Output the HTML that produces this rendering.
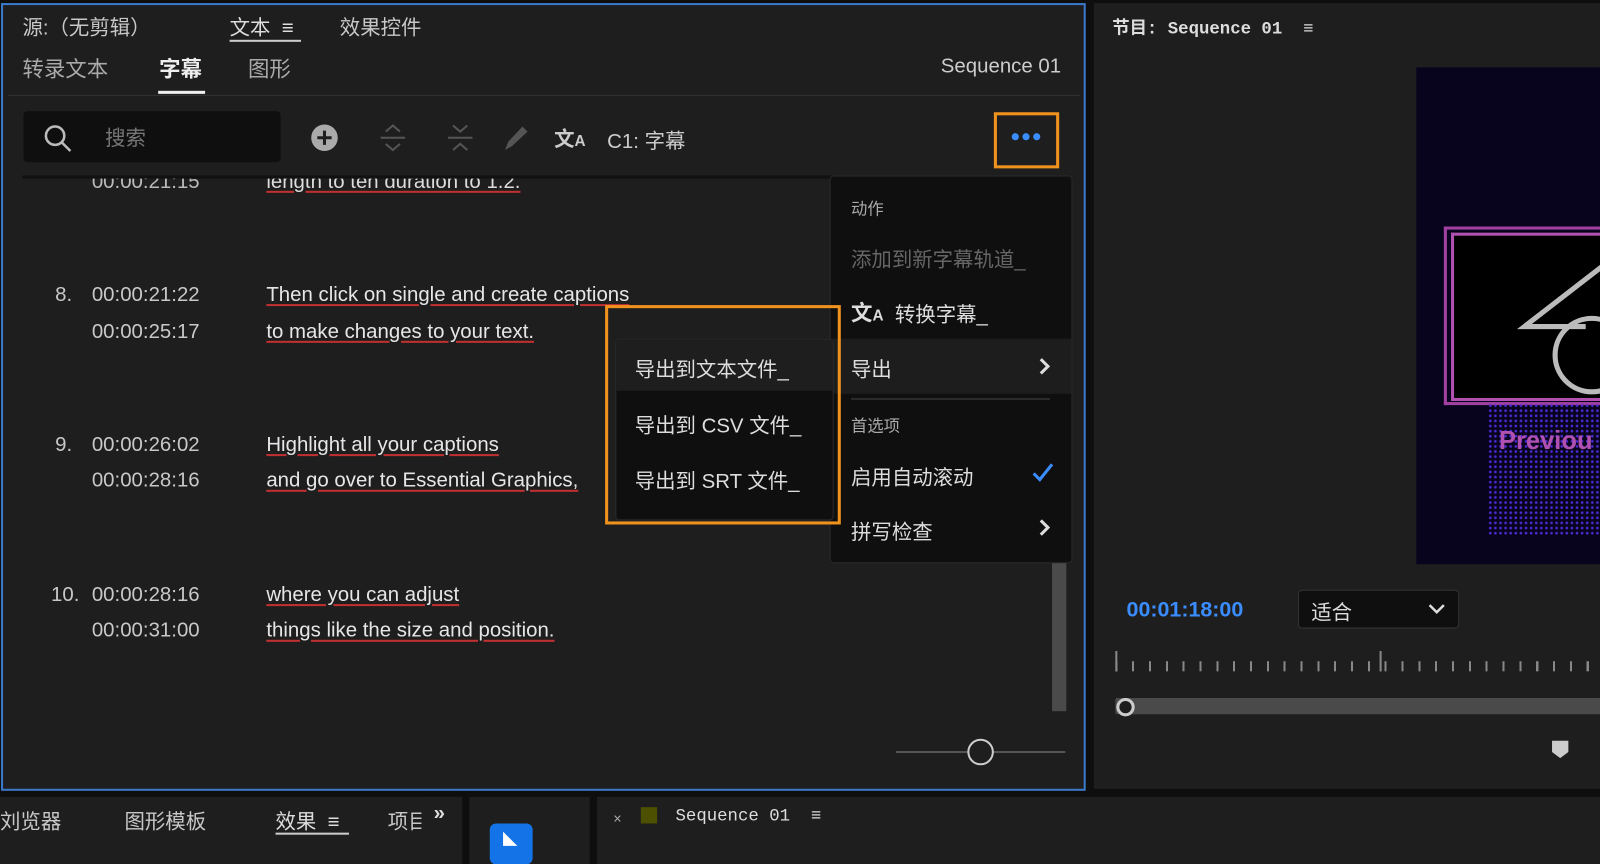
<!DOCTYPE html>
<html><head><meta charset="utf-8"><style>
*{margin:0;padding:0;box-sizing:border-box}
body{width:1600px;height:847px;background:#0e0e0e;overflow:hidden;position:relative;font-family:"Liberation Sans","Noto Sans CJK SC",sans-serif;color:#c8c8c8}
#w{position:absolute;left:0;top:0;width:1568px;height:830px;transform:scale(1.0204);transform-origin:0 0}
.a{position:absolute}
.t{font-size:20px;white-space:nowrap}
.u{text-decoration:underline;text-decoration-color:#c03030;text-underline-offset:3px}
.mono{font-family:"Liberation Mono","Noto Sans CJK SC",monospace}
</style></head><body><div id="w">
<div class="a" style="left:1px;top:3px;width:1063px;height:772px;background:#1e1e1e;border:2px solid #3a78c8"></div>
<div class="a t" style="left:22px;top:11px">源:（无剪辑）</div>
<div class="a t" style="left:225px;top:11px;color:#ddd">文本 &nbsp;≡</div>
<div class="a" style="left:225px;top:39px;width:70px;height:2px;background:#ccc"></div>
<div class="a t" style="left:333px;top:11px">效果控件</div>
<div class="a t" style="left:22px;top:52px;font-size:21px;color:#aaa">转录文本</div>
<div class="a t" style="left:156px;top:52px;font-size:21px;color:#eee;font-weight:bold">字幕</div>
<div class="a" style="left:155px;top:89px;width:46px;height:3px;background:#eee"></div>
<div class="a t" style="left:243px;top:52px;font-size:21px;color:#aaa">图形</div>
<div class="a t" style="left:922px;top:54px;color:#ccc">Sequence 01</div>
<div class="a" style="left:8px;top:93px;width:1050px;height:1px;background:#333"></div>
<div class="a" style="left:23px;top:109px;width:252px;height:50px;background:#0f0f0f;border-radius:4px"></div>
<svg class="a" style="left:40px;top:120px" width="32" height="32"><circle cx="14" cy="13" r="9" stroke="#bbb" stroke-width="2.5" fill="none"/><line x1="21" y1="20" x2="29" y2="28" stroke="#bbb" stroke-width="2.5"/></svg>
<div class="a t" style="left:103px;top:119px;color:#777">搜索</div>
<svg class="a" style="left:303px;top:120px" width="30" height="30"><circle cx="15" cy="15" r="13" fill="#aaa"/><path d="M15 8v14M8 15h14" stroke="#1e1e1e" stroke-width="3"/></svg>
<svg class="a" style="left:370px;top:120px" width="30" height="30" fill="none" stroke="#555" stroke-width="2"><path d="M8 9l7-6 7 6M3 15h24M8 21l7 6 7-6"/></svg>
<svg class="a" style="left:436px;top:120px" width="30" height="30" fill="none" stroke="#555" stroke-width="2"><path d="M8 3l7 6 7-6M3 15h24M8 27l7-6 7 6"/></svg>
<svg class="a" style="left:491px;top:120px" width="30" height="30"><path d="M4 27l3-8 14-15 5 5-15 14z" fill="#555"/></svg>
<div class="a" style="left:543px;top:120px;font-size:20px;color:#ccc;font-weight:bold">文<span style="font-size:15px">A</span></div>
<div class="a t" style="left:595px;top:122px;color:#ccc">C1: 字幕</div>
<div class="a" style="left:974px;top:110px;width:64px;height:55px;border:3px solid #f0921e"></div>
<svg class="a" style="left:990px;top:128px" width="32" height="12"><circle cx="5" cy="6" r="3.5" fill="#3a8dff"/><circle cx="15.5" cy="6" r="3.5" fill="#3a8dff"/><circle cx="26" cy="6" r="3.5" fill="#3a8dff"/></svg>
<div class="a" style="left:22px;top:172px;width:1010px;height:3px;background:#111"></div>
<div class="a" style="left:22px;top:175px;width:790px;height:20px;overflow:hidden">
<div class="a t" style="left:68px;top:-8px;color:#bbb">00:00:21:15</div>
<div class="a t u" style="left:239px;top:-8px;color:#ddd">length to ten duration to 1.2.</div>
</div>
<div class="a t" style="left:54px;top:278px">8.</div><div class="a t" style="left:90px;top:278px">00:00:21:22</div><div class="a t" style="left:90px;top:314px">00:00:25:17</div>
<div class="a t u" style="left:261px;top:278px;color:#e6e6e6">Then click on single and create captions</div>
<div class="a t u" style="left:261px;top:314px;color:#e6e6e6">to make changes to your text.</div>
<div class="a t" style="left:54px;top:425px">9.</div><div class="a t" style="left:90px;top:425px">00:00:26:02</div><div class="a t" style="left:90px;top:460px">00:00:28:16</div>
<div class="a t u" style="left:261px;top:425px;color:#e6e6e6">Highlight all your captions</div>
<div class="a t u" style="left:261px;top:460px;color:#e6e6e6">and go over to Essential Graphics,</div>
<div class="a t" style="left:50px;top:572px">10.</div><div class="a t" style="left:90px;top:572px">00:00:28:16</div><div class="a t" style="left:90px;top:607px">00:00:31:00</div>
<div class="a t u" style="left:261px;top:572px;color:#e6e6e6">where you can adjust</div>
<div class="a t u" style="left:261px;top:607px;color:#e6e6e6">things like the size and position.</div>
<div class="a" style="left:1031px;top:545px;width:14px;height:152px;background:#4a4a4a"></div>
<div class="a" style="left:878px;top:736px;width:166px;height:2px;background:#555"></div>
<div class="a" style="left:948px;top:724px;width:26px;height:26px;border:2px solid #ccc;border-radius:50%;background:#1e1e1e"></div>
<div class="a" style="left:813px;top:172px;width:238px;height:380px;background:#0f0f0f;border:1px solid #2a2a2a;border-radius:4px"></div>
<div class="a" style="left:814px;top:332px;width:236px;height:54px;background:#1d1d1d"></div>
<div class="a t" style="left:834px;top:191px;font-size:16px;color:#aaa">动作</div>
<div class="a t" style="left:834px;top:238px;color:#666">添加到新字幕轨道_</div>
<div class="a" style="left:834px;top:291px;font-size:21px;color:#ddd;font-weight:bold">文<span style="font-size:15px">A</span></div>
<div class="a t" style="left:877px;top:292px;color:#ddd">转换字幕_</div>
<div class="a t" style="left:834px;top:346px;color:#ddd">导出</div>
<svg class="a" style="left:1017px;top:349px" width="14" height="20"><path d="M3 3l7 7-7 7" stroke="#ddd" stroke-width="3" fill="none"/></svg>
<div class="a" style="left:834px;top:390px;width:195px;height:2px;background:#2a2a2a"></div>
<div class="a t" style="left:834px;top:404px;font-size:16px;color:#aaa">首选项</div>
<div class="a t" style="left:834px;top:452px;color:#ddd">启用自动滚动</div>
<svg class="a" style="left:1010px;top:452px" width="24" height="22"><path d="M3 12l6 6L21 3" stroke="#3a8dff" stroke-width="3" fill="none"/></svg>
<div class="a t" style="left:834px;top:505px;color:#ddd">拼写检查</div>
<svg class="a" style="left:1017px;top:507px" width="14" height="20"><path d="M3 3l7 7-7 7" stroke="#ddd" stroke-width="3" fill="none"/></svg>
<div class="a" style="left:593px;top:299px;width:231px;height:215px;border:3px solid #f0921e"></div>
<div class="a" style="left:603px;top:332px;width:214px;height:178px;background:#0f0f0f;border:1px solid #2a2a2a;border-radius:4px"></div>
<div class="a" style="left:604px;top:333px;width:212px;height:50px;background:#1e1e1e"></div>
<div class="a t" style="left:622px;top:346px;color:#ddd">导出到文本文件_</div>
<div class="a t" style="left:622px;top:401px;color:#ddd">导出到 CSV 文件_</div>
<div class="a t" style="left:622px;top:455px;color:#ddd">导出到 SRT 文件_</div>
<div class="a" style="left:1072px;top:3px;width:528px;height:770px;background:#1e1e1e"></div>
<div class="a mono" style="left:1090px;top:13px;font-size:17px;color:#ddd;font-weight:bold">节目: Sequence 01 &nbsp;≡</div>
<div class="a" style="left:1388px;top:66px;width:212px;height:487px;background:#08041e"></div>
<div class="a" style="left:1415px;top:222px;width:185px;height:175px;border-left:3px solid #a040a0;border-top:3px solid #a040a0;border-bottom:3px solid #a040a0"></div>
<div class="a" style="left:1422px;top:228px;width:178px;height:165px;background:#000;border-left:3px solid #b050b0;border-top:3px solid #b050b0;border-bottom:3px solid #b050b0"></div>
<svg class="a" style="left:1480px;top:230px" width="120" height="160"><path d="M120 8L14 90h60" stroke="#bbb" stroke-width="5" fill="none"/><circle cx="80" cy="118" r="36" stroke="#bbb" stroke-width="5" fill="none"/></svg>
<div class="a" style="left:1458px;top:395px;width:142px;height:130px;background-image:radial-gradient(#4a2ad0 1.2px,transparent 1.5px);background-size:5px 5px"></div>
<div class="a" style="left:1469px;top:418px;font-size:25px;font-weight:bold;color:#b050b0">Previou</div>
<div class="a" style="left:1104px;top:586px;font-size:21px;font-weight:bold;color:#3a8dff">00:01:18:00</div>
<div class="a" style="left:1272px;top:578px;width:158px;height:38px;background:#0f0f0f;border:1px solid #333;border-radius:4px"></div>
<div class="a t" style="left:1285px;top:584px;color:#ddd">适合</div>
<svg class="a" style="left:1398px;top:590px" width="20" height="14"><path d="M3 3l7 7 7-7" stroke="#ddd" stroke-width="2.5" fill="none"/></svg>
<div class="a" style="left:1093px;top:640px;width:507px;height:18px;background:repeating-linear-gradient(90deg,#888 0 2px,transparent 2px 16.5px);clip-path:inset(8px 0 0 0)"></div>
<div class="a" style="left:1093px;top:638px;width:2px;height:20px;background:#888"></div>
<div class="a" style="left:1352px;top:638px;width:2px;height:20px;background:#888"></div>
<div class="a" style="left:1093px;top:684px;width:507px;height:16px;background:#4a4a4a;border-radius:2px"></div>
<div class="a" style="left:1094px;top:684px;width:18px;height:18px;border:3px solid #ccc;border-radius:50%;background:#1e1e1e"></div>
<svg class="a" style="left:1520px;top:725px" width="18" height="20"><path d="M1 1h16v11l-8 6-8-6z" fill="#ccc"/></svg>
<div class="a" style="left:0;top:781px;width:453px;height:66px;background:#1e1e1e"></div>
<div class="a t" style="left:0;top:789px">刘览器</div>
<div class="a t" style="left:122px;top:789px">图形模板</div>
<div class="a t" style="left:270px;top:789px;color:#ddd">效果 &nbsp;≡</div>
<div class="a" style="left:270px;top:816px;width:72px;height:2px;background:#ccc"></div>
<div class="a t" style="left:380px;top:789px">项目</div>
<div class="a" style="left:413px;top:781px;width:40px;height:66px;background:#1e1e1e"></div>
<div class="a t" style="left:425px;top:786px;font-weight:bold;color:#ddd">»</div>
<div class="a" style="left:460px;top:781px;width:118px;height:66px;background:#1e1e1e"></div>
<div class="a" style="left:480px;top:807px;width:42px;height:40px;background:#1473e6;border-radius:6px"></div>
<svg class="a" style="left:490px;top:813px" width="20" height="34"><path d="M3 2l14 14H3z" fill="#fff"/></svg>
<div class="a" style="left:585px;top:781px;width:1015px;height:66px;background:#1e1e1e"></div>
<div class="a" style="left:601px;top:794px;font-size:14px;color:#aaa">×</div>
<div class="a" style="left:628px;top:791px;width:16px;height:16px;background:#4c5000"></div>
<div class="a mono" style="left:662px;top:791px;font-size:17px;color:#ddd">Sequence 01 &nbsp;≡</div>
</div></body></html>
